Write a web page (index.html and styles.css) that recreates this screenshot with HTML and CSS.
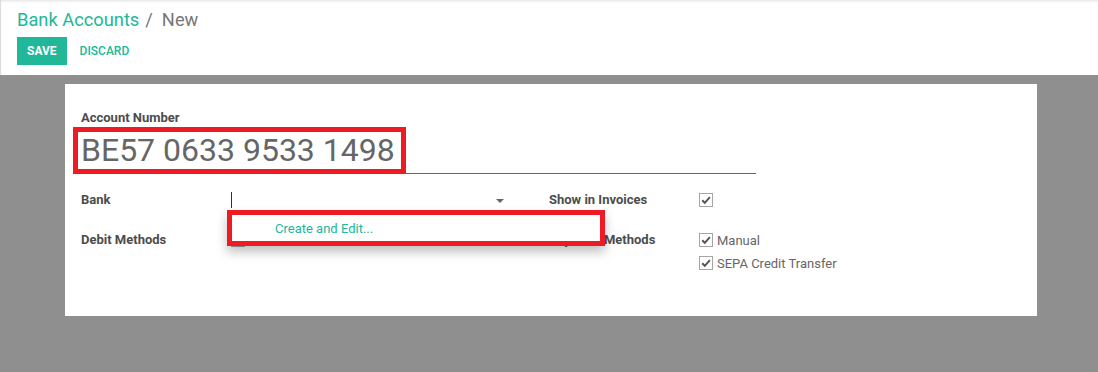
FILE: index.html
```html
<!DOCTYPE html>
<html>
<head>
<meta charset="utf-8">
<link rel="stylesheet" href="styles.css">
</head>
<body>
<div class="control-panel">
  <div class="breadcrumb"><span class="crumb-link">Bank Accounts</span><span class="crumb-sep">/</span><span class="crumb-current">New</span></div>
  <div class="buttons">
    <span class="btn-save">SAVE</span>
    <span class="btn-discard">DISCARD</span>
  </div>
</div>
<div class="form-view">
  <div class="sheet">
    <div class="title-label">Account Number</div>
    <div class="title-field">
      BE57 0633 9533 1498
      <div class="annot annot-title"></div>
    </div>
    <div class="groups">
      <div class="group">
        <div class="row">
          <div class="label">Bank</div>
          <div class="field bank-field">
            <span class="cursor"></span>
            <span class="caret"></span>
            <div class="dropdown"><span class="dropdown-item">Create and Edit...</span></div>
          </div>
        </div>
        <div class="row">
          <div class="label">Debit Methods</div>
          <div class="field">
            <div class="check-item">
              <svg class="cb" width="14" height="14" viewBox="0 0 14 14"><rect x="0.5" y="0.5" width="13" height="13" fill="#fff" stroke="#a5a5a5"/></svg>
            </div>
          </div>
        </div>
      </div>
      <div class="group">
        <div class="row">
          <div class="label">Show in Invoices</div>
          <div class="field">
            <div class="check-item">
              <svg class="cb" width="14" height="14" viewBox="0 0 14 14"><rect x="0.5" y="0.5" width="13" height="13" fill="#fff" stroke="#a5a5a5"/><path d="M3.2 7.2 L5.8 9.8 L10.9 4.2" fill="none" stroke="#555" stroke-width="2"/></svg>
            </div>
          </div>
        </div>
        <div class="row">
          <div class="label">Payment Methods</div>
          <div class="field">
            <div class="check-item">
              <svg class="cb" width="14" height="14" viewBox="0 0 14 14"><rect x="0.5" y="0.5" width="13" height="13" fill="#fff" stroke="#a5a5a5"/><path d="M3.2 7.2 L5.8 9.8 L10.9 4.2" fill="none" stroke="#555" stroke-width="2"/></svg>
              <span class="check-text">Manual</span>
            </div>
            <div class="check-item">
              <svg class="cb" width="14" height="14" viewBox="0 0 14 14"><rect x="0.5" y="0.5" width="13" height="13" fill="#fff" stroke="#a5a5a5"/><path d="M3.2 7.2 L5.8 9.8 L10.9 4.2" fill="none" stroke="#555" stroke-width="2"/></svg>
              <span class="check-text">SEPA Credit Transfer</span>
            </div>
          </div>
        </div>
      </div>
    </div>
  </div>
</div>
</body>
</html>
```
FILE: styles.css
```css
html, body {
  margin: 0;
  padding: 0;
}
body {
  font-family: Roboto, "Liberation Sans", sans-serif;
  background: #8f8f8f;
  height: 372px;
  overflow: hidden;
}
.control-panel {
  background: #fff;
  height: 75px;
  box-sizing: border-box;
  padding: 9px 16px 0 16px;
  border-left: 1px solid #dcdcdc;
  box-shadow: inset 0 2px 3px -1px rgba(0,0,0,0.12);
}
.breadcrumb {
  font-size: 18.3px;
  line-height: 22px;
  height: 22px;
}
.crumb-link {
  color: #21b799;
}
.crumb-sep {
  color: #777;
  margin: 0 9px 0 6px;
}
.crumb-current {
  color: #777;
}
.buttons {
  margin-top: 6px;
  display: flex;
  align-items: center;
}
.btn-save {
  background: #21b799;
  color: #fff;
  font-size: 12px;
  font-weight: bold;
  height: 28px;
  line-height: 28px;
  padding: 0 10px;
}
.btn-discard {
  color: #21b799;
  font-size: 12px;
  font-weight: 500;
  margin-left: 13px;
}
.form-view {
  padding-top: 9px;
}
.sheet {
  margin-left: 65px;
  width: 972px;
  height: 232px;
  box-sizing: border-box;
  background: #fff;
  padding: 25px 16px 0 16px;
}
.title-label {
  font-size: 13px;
  font-weight: bold;
  color: #4c4c4c;
  line-height: 18px;
}
.title-field {
  position: relative;
  width: 675px;
  font-size: 32px;
  line-height: 36px;
  color: #666;
  padding: 5px 0 5px 0;
  border-bottom: 1px solid #666;
}
.annot {
  position: absolute;
  border: 5px solid #ed1c24;
  box-sizing: border-box;
}
.annot-title {
  left: -8px;
  top: 0;
  width: 333px;
  height: 47px;
}
.groups {
  display: flex;
  margin-top: 17px;
}
.group {
  width: 468px;
}
.row {
  display: flex;
  min-height: 40px;
}
.label {
  width: 150px;
  font-size: 13px;
  font-weight: bold;
  color: #4c4c4c;
  line-height: 18px;
}
.field {
  flex: 1;
  font-size: 13px;
  color: #666;
}
.bank-field {
  position: relative;
  flex: none;
  width: 278px;
  height: 18px;
}
.cursor {
  position: absolute;
  left: 0;
  top: 1px;
  width: 1px;
  height: 16px;
  background: #333;
}
.caret {
  position: absolute;
  left: 265px;
  top: 8px;
  width: 0;
  height: 0;
  border-left: 4px solid transparent;
  border-right: 4px solid transparent;
  border-top: 4px solid #666;
}
.dropdown {
  position: absolute;
  left: -4px;
  top: 19px;
  width: 378px;
  height: 36px;
  box-sizing: border-box;
  background: #fff;
  border: 5px solid #ed1c24;
  box-shadow: 0 6px 10px rgba(0,0,0,0.25);
  padding: 2px 0 0 43px;
  z-index: 5;
}
.dropdown-item {
  display: block;
  color: #21b799;
  font-size: 13px;
  line-height: 24px;
}
.check-item {
  display: flex;
  align-items: center;
  height: 18px;
  margin-bottom: 5px;
}
.cb {
  display: block;
  flex: none;
}
.check-text {
  margin-left: 4px;
  font-size: 13px;
  color: #666;
}
```
